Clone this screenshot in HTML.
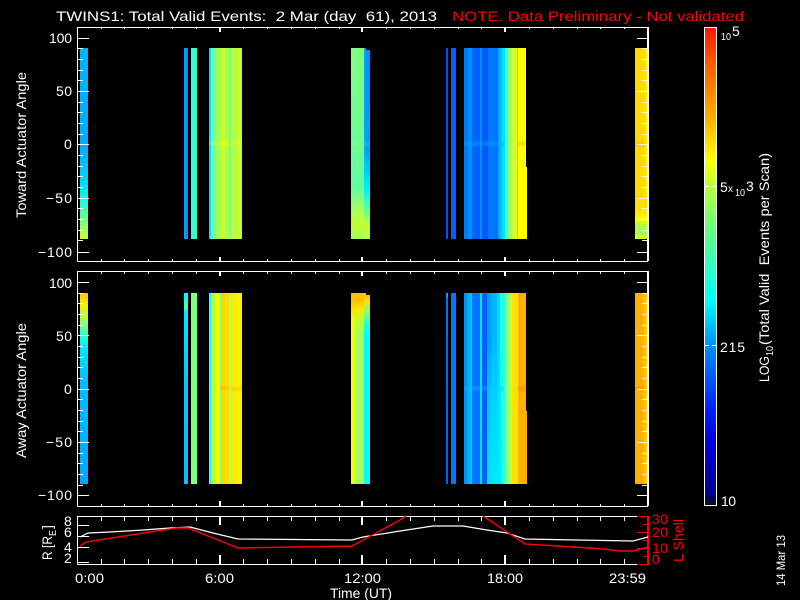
<!DOCTYPE html>
<html lang="en">
<head>
<meta charset="utf-8">
<title>TWINS1 Total Valid Events</title>
<style>
html,body{margin:0;padding:0;background:#000;}
#w{position:relative;width:800px;height:600px;background:#000;overflow:hidden;}
#w div{position:absolute;}
svg{position:absolute;left:0;top:0;}
text{font-family:"Liberation Sans",sans-serif;font-size:14px;fill:#fff;}
.r{fill:#f00;}
.s{font-size:10px;}
</style>
</head>
<body>
<div id="w">
<!-- PANEL 1 bars -->
<div style="left:80px;top:48px;width:8px;height:191px;background:linear-gradient(180deg,#00b4ff 0,#00acff 100px,#00d8ff 135px,#20ffe0 155px,#70ff90 170px,#c8ff30 191px)"></div>
<div style="left:184px;top:48px;width:4px;height:191px;background:linear-gradient(90deg,#00a0ff 0 2px,#0090ff 0 4px)"></div>
<div style="left:191px;top:48px;width:6px;height:191px;background:linear-gradient(90deg,#30ffd0 0 4px,#40ffb0 0 6px)"></div>
<div style="left:209px;top:48px;width:33px;height:191px;background:linear-gradient(90deg,#00e0ff 0 2px,#60ffa0 0 4px,#78ff88 0 6px,#90ff70 0 9px,#a8ff50 0 11px,#c0ff30 0 16px,#a8ff50 0 20px,#70ff90 0 22px,#b8ff40 0 25px,#c0ff38 0 33px)"></div>
<div style="left:351px;top:48px;width:13px;height:191px;background:linear-gradient(180deg,#80ff80 0,#60ffa0 140px,#b0ff50 165px,#c0ff30 180px,#a0ff60 191px)"></div>
<div style="left:364px;top:48px;width:2px;height:191px;background:linear-gradient(180deg,#00a0ff 0,#00a8ff 100px,#00f0ff 142px,#40ffc0 157px,#c0ff30 177px,#b0ff50 191px)"></div>
<div style="left:366px;top:50px;width:4px;height:189px;background:linear-gradient(180deg,#0090ff 0,#00a0ff 100px,#00f0ff 140px,#40ffc0 155px,#c0ff30 175px,#b0ff50 189px)"></div>
<div style="left:446px;top:48px;width:2px;height:191px;background:#0050ff"></div>
<div style="left:451px;top:48px;width:5px;height:191px;background:#0060ff"></div>
<div style="left:464px;top:48px;width:62px;height:191px;background:linear-gradient(90deg,#0078ff 0 4px,#0090ff 0 8px,#0068ff 0 12px,#0060ff 0 16px,#0090ff 0 18px,#0058ff 0 24px,#0078ff 0 31px,#0070ff 0 34px,#00a8ff 0 36px,#00c0ff 0 38px,#00e0ff 0 41px,#40ffc0 0 44px,#98ff68 0 48px,#d0ff30 0 51px,#e8ff18 0 53px,#40f0c0 0 54px,#ffff00 0 62px)"></div>
<div style="left:526px;top:167px;width:1px;height:72px;background:#ffff00"></div>
<div style="left:635px;top:48px;width:12px;height:191px;background:linear-gradient(180deg,#ffd800 0,#ffd800 150px,#ffe800 165px,#ffff00 172px,#c0ff30 175px,#a8ff50 180px,#a8ff50 186px,#d0ff20 188px,#d0ff20 191px)"></div>
<div style="left:644px;top:48px;width:3px;height:150px;background:#ffe600"></div>
<!-- band panel 1 -->
<div style="left:209px;top:141px;width:33px;height:5px;background:rgba(255,255,0,.18)"></div>
<div style="left:220px;top:141px;width:8px;height:5px;background:rgba(255,255,0,.5)"></div>
<div style="left:351px;top:141px;width:19px;height:5px;background:rgba(180,255,80,.12)"></div>
<div style="left:464px;top:141px;width:40px;height:5px;background:rgba(0,170,255,.35)"></div>
<div style="left:518px;top:141px;width:8px;height:5px;background:#ffe000"></div>
<div style="left:635px;top:141px;width:9px;height:5px;background:#ffc800"></div>
<!-- PANEL 2 bars -->
<div style="left:80px;top:293px;width:8px;height:191px;background:linear-gradient(180deg,#ffc000 0,#f8f000 12px,#a0ff60 27px,#30ffd0 42px,#00e8ff 55px,#00c0ff 85px,#00a8ff 191px)"></div>
<div style="left:184px;top:293px;width:4px;height:191px;background:linear-gradient(180deg,#00ffff 0,#00ffff 7px,#40ffb0 8px,#40ffb0 16px,#00e8ff 18px,#00c8ff 90px,#00c0ff 191px)"></div>
<div style="left:191px;top:293px;width:6px;height:191px;background:#80ff80"></div>
<div style="left:209px;top:293px;width:33px;height:191px;background:linear-gradient(90deg,#80ff80 0 1px,#00ffff 0 2px,#c0ff30 0 6px,#f0ff00 0 11px,#80ff80 0 12px,#ffd800 0 16px,#ffe000 0 20px,#b0ff50 0 22px,#ffe800 0 24px,#fff000 0 33px)"></div>
<div style="left:351px;top:293px;width:4px;height:191px;background:linear-gradient(180deg,#ffc000 0,#ffc000 8px,#ffe800 18px,#e8ff10 30px,#e8ff10 191px)"></div>
<div style="left:355px;top:293px;width:9px;height:191px;background:linear-gradient(180deg,#ffc000 0,#ffc000 8px,#ffe800 16px,#c0ff30 26px,#a0ff60 40px,#a0ff60 191px)"></div>
<div style="left:364px;top:293px;width:2px;height:191px;background:linear-gradient(180deg,#ffc000 0,#ffe000 8px,#90ff70 18px,#20ffe0 32px,#00ffff 42px,#00ffff 191px)"></div>
<div style="left:366px;top:295px;width:4px;height:189px;background:linear-gradient(180deg,#ffc000 0,#ffe000 6px,#90ff70 16px,#20ffe0 30px,#00ffff 40px,#00ffff 189px)"></div>
<div style="left:446px;top:293px;width:2px;height:191px;background:linear-gradient(180deg,#00a0ff 0,#00a0ff 4px,#0070ff 5px,#0060ff 191px)"></div>
<div style="left:451px;top:293px;width:5px;height:191px;background:#0078ff"></div>
<div style="left:464px;top:293px;width:62px;height:191px;background:linear-gradient(90deg,#0090ff 0 3px,#00b0ff 0 6px,#00c8ff 0 8px,#0078ff 0 12px,#0070ff 0 16px,#00e0ff 0 18px,#0060ff 0 23px,#00a0ff 0 27px,#00b8ff 0 33px,#00d8ff 0 36px,#20ffe0 0 41px,#90ff70 0 45px,#c8ff30 0 48px,#ffe000 0 53px,#ffff00 0 54px,#ffb000 0 62px)"></div>
<div style="left:487px;top:340px;width:15px;height:144px;background:linear-gradient(180deg,rgba(0,235,255,0) 0,rgba(0,235,255,.55) 60px,rgba(0,240,255,.85) 144px)"></div>
<div style="left:526px;top:411px;width:1px;height:73px;background:#ffb000"></div>
<div style="left:635px;top:293px;width:9px;height:191px;background:#ffb000"></div>
<div style="left:644px;top:293px;width:3px;height:191px;background:#ffc800"></div>
<!-- band panel 2 -->
<div style="left:220px;top:386px;width:9px;height:4px;background:#ffc400"></div>
<div style="left:231px;top:387px;width:11px;height:4px;background:rgba(255,200,0,.6)"></div>
<div style="left:464px;top:386px;width:40px;height:5px;background:rgba(0,200,255,.3)"></div>
<div style="left:518px;top:386px;width:8px;height:5px;background:#ff9c00"></div>
<div style="left:635px;top:386px;width:9px;height:4px;background:#ff9c00"></div>
<!-- colour bar -->
<div style="left:704px;top:27px;width:11px;height:477px;border:1px solid #fff;background:#000"></div>
<div style="left:705px;top:28px;width:11px;height:476px;background:linear-gradient(180deg,#ff1800 0,#ff5500 32px,#ffb000 92px,#ffff00 132px,#b8ff38 159px,#50ff90 212px,#00ffff 272px,#0090ff 317px,#0020ff 382px,#0000e0 412px,#000090 466px,#000060 470px,#101020 476px)"></div>
<svg width="800" height="600" viewBox="0 0 800 600">
<g fill="none" stroke="#fff" stroke-width="1" shape-rendering="crispEdges">
<!-- frames -->
<path d="M77.5 261.5V27.5H648M77.5 261.5H648M77.5 506.5V271.5H648M77.5 506.5H648M77.5 564.5V516.5H637M77.5 564.5H637"/>
<path d="M648 27V261M648 271V506" stroke-width="2"/>
<!-- panel 1 y ticks -->
<path d="M78 38.5H89M78 91.5H89M78 144.5H89M78 198.5H89M78 252.5H89M637 38.5H648M637 91.5H648M637 144.5H648M637 198.5H648M637 252.5H648"/>
<path d="M78 48.5H83M78 59.5H83M78 70.5H83M78 80.5H83M78 102.5H83M78 112.5H83M78 123.5H83M78 134.5H83M78 155.5H83M78 166.5H83M78 176.5H83M78 187.5H83M78 208.5H83M78 219.5H83M78 230.5H83M78 240.5H83"/>
<path d="M642 48.5H648M642 59.5H648M642 70.5H648M642 80.5H648M642 102.5H648M642 112.5H648M642 123.5H648M642 134.5H648M642 155.5H648M642 166.5H648M642 176.5H648M642 187.5H648M642 208.5H648M642 219.5H648M642 230.5H648M642 240.5H648"/>
<!-- panel 2 y ticks -->
<path d="M78 282.5H89M78 335.5H89M78 389.5H89M78 442.5H89M78 495.5H89M637 282.5H648M637 335.5H648M637 389.5H648M637 442.5H648M637 495.5H648"/>
<path d="M78 293.5H83M78 303.5H83M78 314.5H83M78 325.5H83M78 346.5H83M78 357.5H83M78 367.5H83M78 378.5H83M78 399.5H83M78 410.5H83M78 421.5H83M78 431.5H83M78 453.5H83M78 463.5H83M78 474.5H83M78 485.5H83"/>
<path d="M642 293.5H648M642 303.5H648M642 314.5H648M642 325.5H648M642 346.5H648M642 357.5H648M642 367.5H648M642 378.5H648M642 399.5H648M642 410.5H648M642 421.5H648M642 431.5H648M642 453.5H648M642 463.5H648M642 474.5H648M642 485.5H648"/>
<!-- x minor ticks, panels 1 & 2 -->
<path d="M101.5 28V29M124.5 28V29M148.5 28V29M172.5 28V29M196.5 28V29M243.5 28V29M267.5 28V29M291.5 28V29M315.5 28V29M339.5 28V29M386.5 28V29M410.5 28V29M434.5 28V29M458.5 28V29M481.5 28V29M529.5 28V29M553.5 28V29M577.5 28V29M600.5 28V29M624.5 28V29"/>
<path d="M101.5 259V261M124.5 259V261M148.5 259V261M172.5 259V261M196.5 259V261M243.5 259V261M267.5 259V261M291.5 259V261M315.5 259V261M339.5 259V261M386.5 259V261M410.5 259V261M434.5 259V261M458.5 259V261M481.5 259V261M529.5 259V261M553.5 259V261M577.5 259V261M600.5 259V261M624.5 259V261"/>
<path d="M101.5 272V274M124.5 272V274M148.5 272V274M172.5 272V274M196.5 272V274M243.5 272V274M267.5 272V274M291.5 272V274M315.5 272V274M339.5 272V274M386.5 272V274M410.5 272V274M434.5 272V274M458.5 272V274M481.5 272V274M529.5 272V274M553.5 272V274M577.5 272V274M600.5 272V274M624.5 272V274"/>
<path d="M101.5 504V506M124.5 504V506M148.5 504V506M172.5 504V506M196.5 504V506M243.5 504V506M267.5 504V506M291.5 504V506M315.5 504V506M339.5 504V506M386.5 504V506M410.5 504V506M434.5 504V506M458.5 504V506M481.5 504V506M529.5 504V506M553.5 504V506M577.5 504V506M600.5 504V506M624.5 504V506"/>
<!-- x major ticks -->
<path stroke-width="2" d="M220 28V32M362 28V32M505 28V32M220 257V261M362 257V261M505 257V261M220 272V276M362 272V276M505 272V276M220 501V506M362 501V506M505 501V506M220 517V525M362 517V525M505 517V525M220 555V564M362 555V564M505 555V564"/>
<!-- panel 3 ticks -->
<path d="M78 525.5H89M78 536.5H89M78 547.5H89M78 562.5H89"/>
<path d="M101.5 517V521M124.5 517V521M148.5 517V521M172.5 517V521M196.5 517V521M243.5 517V521M267.5 517V521M291.5 517V521M315.5 517V521M339.5 517V521M386.5 517V521M410.5 517V521M434.5 517V521M458.5 517V521M481.5 517V521M529.5 517V521M553.5 517V521M577.5 517V521M600.5 517V521M624.5 517V521"/>
<path d="M101.5 559V564M124.5 559V564M148.5 559V564M172.5 559V564M196.5 559V564M243.5 559V564M267.5 559V564M291.5 559V564M315.5 559V564M339.5 559V564M386.5 559V564M410.5 559V564M434.5 559V564M458.5 559V564M481.5 559V564M529.5 559V564M553.5 559V564M577.5 559V564M600.5 559V564M624.5 559V564"/>
<!-- colour bar ticks -->
<path d="M705 186.5H709M712 186.5H716M705 345.5H709M712 345.5H716"/>
<!-- red axis -->
<path stroke="#f00" d="M637 516.5H648M637 532.5H648M637 548.5H648M637 564.5H648M643 524.5H648M643 540.5H648M643 556.5H648"/>
<path stroke="#f00" stroke-width="2" d="M648 516V565"/>
</g>
<!-- panel 3 data lines -->
<polyline fill="none" stroke="#fff" stroke-width="1.2" points="80,537 88,533 110,532 143,530 170,528 190,527 213,533 238,539 352,540 363,537 400,531 433,526 463,526 487,530 507,533 525,539 577,540 633,541 648,537"/>
<polyline fill="none" stroke="#f00" stroke-width="1.4" points="80,546 86,542 143,533 177,528 188,528 238,548 295,547 352,546 400,520 406,516"/>
<polyline fill="none" stroke="#f00" stroke-width="1.4" points="483,516 525,544 557,546 603,549 620,551 633,551 648,547"/>
<!-- title -->
<text x="56" y="21" textLength="381" lengthAdjust="spacingAndGlyphs" xml:space="preserve">TWINS1: Total Valid Events:  2 Mar (day  61), 2013</text>
<text class="r" x="452" y="21" textLength="292" lengthAdjust="spacingAndGlyphs">NOTE. Data Preliminary - Not validated</text>
<!-- y tick labels panel 1 -->
<text x="49" y="43" textLength="23">100</text>
<text x="56" y="96" textLength="16">50</text>
<text x="64" y="149" textLength="8">0</text>
<text x="46" y="203" textLength="26">−50</text>
<text x="38" y="257" textLength="34">−100</text>
<!-- y tick labels panel 2 -->
<text x="49" y="288" textLength="23">100</text>
<text x="56" y="341" textLength="16">50</text>
<text x="64" y="394" textLength="8">0</text>
<text x="46" y="447" textLength="26">−50</text>
<text x="38" y="500" textLength="34">−100</text>
<!-- rotated labels -->
<text transform="translate(26,218) rotate(-90)" textLength="146" lengthAdjust="spacingAndGlyphs">Toward Actuator Angle</text>
<text transform="translate(26,458) rotate(-90)" textLength="135" lengthAdjust="spacingAndGlyphs">Away Actuator Angle</text>
<text transform="translate(769,382) rotate(-90)" textLength="26" lengthAdjust="spacingAndGlyphs">LOG</text>
<text class="s" transform="translate(773,356) rotate(-90)" textLength="10" lengthAdjust="spacingAndGlyphs">10</text>
<text transform="translate(769,345) rotate(-90)" textLength="192" lengthAdjust="spacingAndGlyphs" xml:space="preserve">(Total Valid  Events per Scan)</text>
<!-- R axis -->
<text transform="translate(52,560) rotate(-90)" textLength="24" lengthAdjust="spacingAndGlyphs">R [R</text>
<text class="s" transform="translate(56,536) rotate(-90)" textLength="6" lengthAdjust="spacingAndGlyphs">E</text>
<text transform="translate(52,529) rotate(-90)">]</text>
<text x="64" y="526" textLength="8">8</text>
<text x="64" y="537" textLength="8">6</text>
<text x="64" y="552" textLength="8">4</text>
<text x="64" y="563" textLength="8">2</text>
<!-- right red axis labels -->
<text class="r" x="652" y="524" textLength="16">30</text>
<text class="r" x="652" y="537" textLength="16">20</text>
<text class="r" x="652" y="553" textLength="16">10</text>
<text class="r" x="652" y="564" textLength="8">0</text>
<text class="r" transform="translate(683,562) rotate(-90)" textLength="43" lengthAdjust="spacingAndGlyphs">L Shell</text>
<!-- x labels -->
<text x="75" y="583" textLength="29" lengthAdjust="spacingAndGlyphs">0:00</text>
<text x="205" y="583" textLength="29" lengthAdjust="spacingAndGlyphs">6:00</text>
<text x="344" y="583" textLength="37" lengthAdjust="spacingAndGlyphs">12:00</text>
<text x="487" y="583" textLength="36" lengthAdjust="spacingAndGlyphs">18:00</text>
<text x="609" y="583" textLength="37" lengthAdjust="spacingAndGlyphs">23:59</text>
<text x="330" y="598" textLength="62" lengthAdjust="spacingAndGlyphs">Time (UT)</text>
<!-- colour bar labels -->
<text class="s" x="721" y="40" textLength="10" lengthAdjust="spacingAndGlyphs">10</text>
<text x="732" y="36" textLength="8">5</text>
<text x="720" y="192" textLength="8">5</text>
<text class="s" x="728" y="192" textLength="7">x</text>
<text class="s" x="735" y="196" textLength="10" lengthAdjust="spacingAndGlyphs">10</text>
<text x="746" y="191" textLength="8">3</text>
<text x="720" y="352" textLength="25">215</text>
<text x="721" y="506" textLength="15">10</text>
<!-- date -->
<text style="font-size:12px" transform="translate(785,586) rotate(-90)" textLength="51" lengthAdjust="spacingAndGlyphs">14 Mar 13</text>
</svg>
</div>
</body>
</html>
